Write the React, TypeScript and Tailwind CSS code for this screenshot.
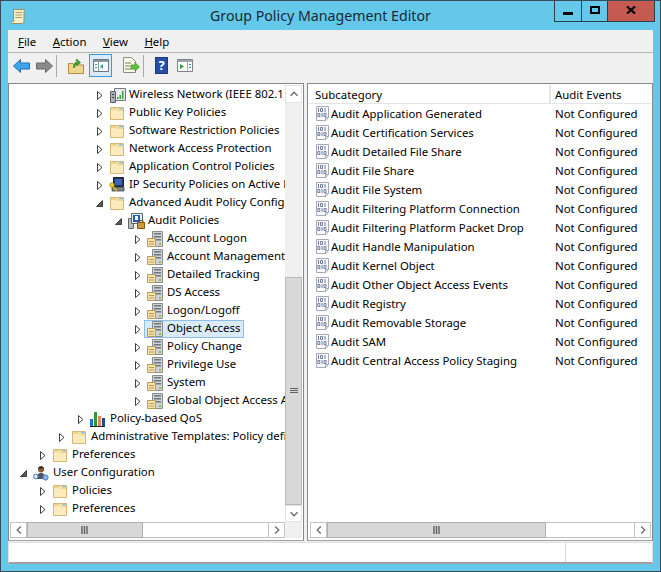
import React from "react";

const Tri = ({ open }: { open?: boolean }) =>
  open ? (
    <svg width="9" height="9" viewBox="0 0 9 9" className="shrink-0">
      <path d="M7.5 1.5V7.5H1.5Z" fill="#595959" stroke="#404040" strokeWidth="1" />
    </svg>
  ) : (
    <svg width="9" height="11" viewBox="0 0 9 11" className="shrink-0">
      <path d="M2.5 1.5L7 5.5L2.5 9.5Z" fill="#fff" stroke="#404040" strokeWidth="1" />
    </svg>
  );

const Folder = () => (
  <svg width="16" height="16" viewBox="0 0 16 16" className="shrink-0">
    <path d="M1.5 2.5H14.5V14.5H1.5Z" fill="#f7e2a6" stroke="#d3b878" />
    <path d="M2 3H7L8.5 5H14V14H2Z" fill="#fbeabb" />
    <path d="M2 5H7.5L8.5 6H14V5H8.5L7 3H2Z" fill="#efd48e" />
    <path d="M10 3H14V4.5H10Z" fill="#8ec6ee" />
  </svg>
);

const PolicyIcon = () => (
  <svg width="16" height="16" viewBox="0 0 16 16" className="shrink-0">
    <path d="M5.5 0.5H15.5V15.5H5.5Z" fill="#cfd3d6" stroke="#868c92" />
    <path d="M7 2H14V3.5H7ZM7 5H14V6.5H7ZM7 8H14V9.5H7Z" fill="#6f767c" />
    <path d="M12 12H14V14H12Z" fill="#8cc04a" />
    <path d="M0.5 7.5H8.5V15.5H0.5Z" fill="#f7e2a6" stroke="#b79c60" />
    <path d="M2 10H7V11H2ZM2 12.5H7V13.5H2Z" fill="#b39a60" />
  </svg>
);

const BinIcon = () => (
  <svg width="16" height="16" viewBox="0 0 16 16" className="shrink-0">
    <path d="M2.5 1.5H14.5V12.5L12 15.5H2.5Z" fill="#fbfbfd" stroke="#a4a9b8" />
    <path d="M11.5 15V12.5H14.5" fill="#e4e6ee" stroke="#a4a9b8" />
    <path
      d="M4.5 3V7M6.5 3.5H8.5V6.5H6.5ZM11 3V7M3.8 8.5H5.8V11.5H3.8ZM8 8V12M10 8.5H12V11.5H10Z"
      fill="none"
      stroke="#6f7da0"
    />
  </svg>
);

const WirelessIcon = () => (
  <svg width="18" height="16" viewBox="0 0 18 16" className="shrink-0">
    <path d="M5.5 1.5H16.5V13.5H5.5Z" fill="#e8ecef" stroke="#6f767c" />
    <path d="M1.5 4.5H6.5V15.5H1.5Z" fill="#a9afb5" stroke="#5d6368" />
    <path d="M8 12H9.5V10H8ZM10.5 12H12V8H10.5ZM13 12H14.5V4H13Z" fill="#3d9a3a" />
    <path d="M3 7H5V8H3ZM3 10H5V11H3Z" fill="#3c4246" />
  </svg>
);

const IpIcon = () => (
  <svg width="16" height="16" viewBox="0 0 16 16" className="shrink-0">
    <path d="M4.5 0.5H14.5V9.5H4.5Z" fill="#24356a" stroke="#222" />
    <path d="M6 2H13V8H6Z" fill="#3a64b8" />
    <path d="M3 10H15V14H3Z" fill="#7d858b" stroke="#333" strokeWidth="0.7" />
    <circle cx="3" cy="8" r="2.3" fill="#f3d020" stroke="#8a7a10" strokeWidth="0.6" />
    <path d="M4 9.5L8 14" stroke="#e0b810" strokeWidth="1.6" />
  </svg>
);

const AuditIcon = () => (
  <svg width="18" height="16" viewBox="0 0 18 16" className="shrink-0">
    <path d="M0.5 5.5H5.5V15.5H0.5Z" fill="#b9bdc1" stroke="#666" />
    <path d="M3.5 0.5H14.5V10.5H3.5Z" fill="#e8eef4" stroke="#5b6670" />
    <path d="M5 2H12V9H5Z" fill="#1e5cc0" />
    <path d="M7 3H10V7H7Z" fill="#fff" />
    <path d="M9.5 9.5H16.5V15.5H9.5Z" fill="#d29a3c" stroke="#7a5514" />
    <path d="M11 9.5V7.5H15V9.5" fill="none" stroke="#7a5514" />
  </svg>
);

const QosIcon = () => (
  <svg width="16" height="16" viewBox="0 0 16 16" className="shrink-0">
    <path d="M0 8H3V15H0Z" fill="#1f6fc8" />
    <path d="M4 1H7V15H4Z" fill="#2f9a38" />
    <path d="M8 5H11V15H8Z" fill="#f08060" />
    <path d="M12 7H15V15H12Z" fill="#18508e" />
    <path d="M0 15H15V16H0Z" fill="#222" />
  </svg>
);

const UserIcon = () => (
  <svg width="16" height="16" viewBox="0 0 16 16" className="shrink-0">
    <path d="M4 14C4 9 5.5 8 8 8C10.5 8 12 9 12 14Z" fill="#4c5560" />
    <circle cx="8" cy="4.5" r="3" fill="#8a5a34" />
    <path d="M5 3.5C5.5 0.5 10.5 0.5 11 3.5Z" fill="#2a2a2a" />
    <circle cx="2.8" cy="11.5" r="2.3" fill="#dfe8f6" stroke="#4c76b8" />
    <circle cx="12.5" cy="12.5" r="2.6" fill="#8db4e8" stroke="#4f78ba" />
  </svg>
);

type Row = { t: string; pad: string; icon: React.ReactNode; open?: boolean; sel?: boolean };

const tree: Row[] = [
  { t: "Wireless Network (IEEE 802.11) Policies", pad: "pl-[85px]", icon: <WirelessIcon /> },
  { t: "Public Key Policies", pad: "pl-[85px]", icon: <Folder /> },
  { t: "Software Restriction Policies", pad: "pl-[85px]", icon: <Folder /> },
  { t: "Network Access Protection", pad: "pl-[85px]", icon: <Folder /> },
  { t: "Application Control Policies", pad: "pl-[85px]", icon: <Folder /> },
  { t: "IP Security Policies on Active Directory", pad: "pl-[85px]", icon: <IpIcon /> },
  { t: "Advanced Audit Policy Configuration", pad: "pl-[85px]", icon: <Folder />, open: true },
  { t: "Audit Policies", pad: "pl-[104px]", icon: <AuditIcon />, open: true },
  { t: "Account Logon", pad: "pl-[123px]", icon: <PolicyIcon /> },
  { t: "Account Management", pad: "pl-[123px]", icon: <PolicyIcon /> },
  { t: "Detailed Tracking", pad: "pl-[123px]", icon: <PolicyIcon /> },
  { t: "DS Access", pad: "pl-[123px]", icon: <PolicyIcon /> },
  { t: "Logon/Logoff", pad: "pl-[123px]", icon: <PolicyIcon /> },
  { t: "Object Access", pad: "pl-[123px]", icon: <PolicyIcon />, sel: true },
  { t: "Policy Change", pad: "pl-[123px]", icon: <PolicyIcon /> },
  { t: "Privilege Use", pad: "pl-[123px]", icon: <PolicyIcon /> },
  { t: "System", pad: "pl-[123px]", icon: <PolicyIcon /> },
  { t: "Global Object Access Auditing", pad: "pl-[123px]", icon: <PolicyIcon /> },
  { t: "Policy-based QoS", pad: "pl-[66px]", icon: <QosIcon /> },
  { t: "Administrative Templates: Policy definitions", pad: "pl-[47px]", icon: <Folder /> },
  { t: "Preferences", pad: "pl-[28px]", icon: <Folder /> },
  { t: "User Configuration", pad: "pl-[9px]", icon: <UserIcon />, open: true },
  { t: "Policies", pad: "pl-[28px]", icon: <Folder /> },
  { t: "Preferences", pad: "pl-[28px]", icon: <Folder /> },
];

const list = [
  "Audit Application Generated",
  "Audit Certification Services",
  "Audit Detailed File Share",
  "Audit File Share",
  "Audit File System",
  "Audit Filtering Platform Connection",
  "Audit Filtering Platform Packet Drop",
  "Audit Handle Manipulation",
  "Audit Kernel Object",
  "Audit Other Object Access Events",
  "Audit Registry",
  "Audit Removable Storage",
  "Audit SAM",
  "Audit Central Access Policy Staging",
];

const Chev = ({ d }: { d: string }) => (
  <svg width="14" height="14" viewBox="0 0 16 16">
    <path d={d} fill="none" stroke="#6d6d6d" strokeWidth="1.6" />
  </svg>
);
const Grip = ({ v }: { v?: boolean }) => (
  <svg width="8" height="8" viewBox="0 0 8 8">
    {v ? (
      <path d="M0 1.5H8M0 3.5H8M0 5.5H8" stroke="#606060" />
    ) : (
      <path d="M1 0V8M3.5 0V8M6 0V8" stroke="#606060" strokeWidth="1.4" />
    )}
  </svg>
);

const Btn = ({ d, cls }: { d: string; cls: string }) => (
  <div className={`flex items-center justify-center bg-white border border-[#c4c4c4] ${cls}`}>
    <Chev d={d} />
  </div>
);

const Sep = ({ cls }: { cls: string }) => <div className={`w-px h-[22px] bg-[#a8a8a8] ${cls}`} />;

const U = ({ c, r }: { c: string; r: string }) => (
  <span>
    <span className="underline">{c}</span>
    {r}
  </span>
);

export default function App() {
  return (
    <div className="w-[661px] h-[572px] flex flex-col bg-[#63c8ea] border border-[#3b4b55] overflow-hidden font-['Noto_Sans',sans-serif] text-[11.4px] text-black box-border">
      <div className="h-[29px] shrink-0 flex items-start">
        <svg width="17" height="17" viewBox="0 0 17 17" className="ml-[9px] mt-[7px] shrink-0">
          <path d="M3.5 1.5H13.5C14.5 1.5 14.5 3 14 3.5V13C14 15 13 15.5 12 15.5H2C1 15.5 1 13.5 2.5 13.5H3.5Z" fill="#f5edc8" stroke="#a08f5a" />
          <path d="M5.5 4.5H12M5.5 7H12M5.5 9.5H12" stroke="#b0a070" />
        </svg>
        <div className="ml-[183px] mt-[5px] text-[14.2px] leading-[20px] text-[#1a2a33] whitespace-nowrap">
          Group Policy Management Editor
        </div>
        <div className="ml-auto mr-[5px] flex h-[21px] border border-t-0 border-[#2e3f47]">
          <div className="w-[27px] flex items-center justify-center border-r border-[#2e3f47]">
            <div className="w-[10px] h-[3px] bg-black mt-[4px]" />
          </div>
          <div className="w-[26px] flex items-center justify-center border-r border-[#2e3f47]">
            <div className="w-[10px] h-[8px] border-2 border-black mb-[2px]" />
          </div>
          <div className="w-[46px] bg-[#c55b50] flex items-center justify-center">
            <svg width="10" height="8" viewBox="0 0 10 8" className="mb-[2px]">
              <path d="M1 0.5L9 7.5M9 0.5L1 7.5" stroke="#000" strokeWidth="2.2" />
            </svg>
          </div>
        </div>
      </div>

      <div className="mx-[7px] mb-[7px] flex-1 min-h-0 flex flex-col bg-[#f0f0f0]">
        <div className="h-[23px] shrink-0 flex items-center gap-[16.5px] pl-[10px] pt-[2px] border-b border-[#b4b8b8]">
          <U c="F" r="ile" />
          <U c="A" r="ction" />
          <U c="V" r="iew" />
          <U c="H" r="elp" />
        </div>

        <div className="h-[30px] shrink-0 flex items-center pb-[5px]">
          <svg width="17" height="14" viewBox="0 0 17 14" className="ml-[5px]">
            <path d="M0.5 7L7.5 0.5V4H16.5V10H7.5V13.5Z" fill="#3fa4ea" stroke="#1d6cb4" />
          </svg>
          <svg width="17" height="14" viewBox="0 0 17 14" className="ml-[6px]">
            <path d="M16.5 7L9.5 0.5V4H0.5V10H9.5V13.5Z" fill="#8a8a8a" stroke="#666" />
          </svg>
          <Sep cls="ml-[3px]" />
          <svg width="16" height="16" viewBox="0 0 16 16" className="ml-[11px]">
            <path d="M0.5 5.5H5L6 7H15.5V15.5H0.5Z" fill="#f0d58c" stroke="#b08c3c" />
            <path d="M6 10C6 6 7.5 4.5 9.5 4.5M8 1.5L11.5 4.5L8 7.5" fill="none" stroke="#3c9a34" strokeWidth="2" />
          </svg>
          <div className="ml-[5px] w-[23px] h-[23px] bg-[#d9ebf9] border border-[#3d98d8] flex items-center justify-center">
            <svg width="16" height="13" viewBox="0 0 16 13">
              <path d="M0.5 0.5H15.5V12.5H0.5Z" fill="#fff" stroke="#6c7680" />
              <path d="M1 1H15V3H1Z" fill="#8c96a0" />
              <path d="M5.5 3V12" stroke="#8c96a0" />
              <path d="M2 5H4V6H2ZM2 8H4V9H2ZM7 7.5L10 5V10Z" fill="#2f9a9a" />
            </svg>
          </div>
          <svg width="18" height="17" viewBox="0 0 18 17" className="ml-[10px]">
            <path d="M1.5 0.5H9.5L13.5 4.5V15.5H1.5Z" fill="#fdfbe8" stroke="#8a8a8a" />
            <path d="M3 6H9M3 9H8M3 12H9" stroke="#7a7a58" />
            <path d="M9 8H13V5.5L17.5 10L13 14V12H9Z" fill="#5ec03c" stroke="#3a8e26" strokeWidth="0.7" />
          </svg>
          <Sep cls="ml-[3px]" />
          <div className="ml-[11px] w-[13px] h-[17px] bg-[#244ea8] border border-[#1c3880] flex items-center justify-center text-white font-bold text-[13px] leading-none">
            ?
          </div>
          <svg width="16" height="13" viewBox="0 0 16 13" className="ml-[9px]">
            <path d="M0.5 0.5H15.5V12.5H0.5Z" fill="#fff" stroke="#7c8288" />
            <path d="M1 1H15V3H1Z" fill="#a0a6ac" />
            <path d="M10.5 3V12" stroke="#a0a6ac" />
            <path d="M3 5L7 7.5L3 10Z" fill="#35a03c" />
            <path d="M12 5H14V6H12ZM12 8H14V9H12Z" fill="#3d80c0" />
          </svg>
        </div>

        <div className="h-[458px] shrink-0 flex gap-[3px]">
          <div className="w-[296px] border border-[#828790] border-b-[#a0a0a0] bg-white flex flex-col pt-px pl-px pr-px pb-[2px]">
            <div className="flex-1 min-h-0 flex">
              <div className="w-[275px] overflow-hidden pt-px">
                {tree.map((r) => (
                  <div key={r.t + r.pad} className={`h-[18px] flex items-center whitespace-nowrap ${r.pad}`}>
                    <div className="w-[9px] shrink-0 flex justify-center">
                      <Tri open={r.open} />
                    </div>
                    <div className={`ml-[2px] h-[18px] flex items-center border pl-[2px] pr-[3px] ${r.sel ? "bg-[#d9ebf9] border-[#8dbdec]" : "border-transparent"}`}>
                      <div className="w-[18px] shrink-0 flex">{r.icon}</div>
                      <span className="ml-[1px] pl-[1px] mb-[2px] leading-[16px]">{r.t}</span>
                    </div>
                  </div>
                ))}
              </div>
              <div className="w-[17px] shrink-0 flex flex-col bg-[#f0f0f0]">
                <div className="h-[18px] shrink-0 flex items-center justify-center bg-white border border-[#e4e4e4]">
                  <Chev d="M4 10L8 6L12 10" />
                </div>
                <div className="h-[174px] shrink-0" />
                <div className="flex-1 bg-[#d8d8d8] border border-[#b8b8b8] flex items-center justify-center">
                  <Grip v />
                </div>
                <div className="h-[17px] shrink-0 flex items-center justify-center bg-white border border-[#e4e4e4]">
                  <Chev d="M4 6L8 10L12 6" />
                </div>
              </div>
            </div>
            <div className="h-[16px] shrink-0 flex">
              <Btn d="M10 4L6 8L10 12" cls="w-[17px]" />
              <div className="w-[116px] bg-[#d8d8d8] border border-[#b0b0b0] flex items-center justify-center">
                <Grip />
              </div>
              <div className="w-[125px] border-y border-[#c4c4c4]" />
              <Btn d="M6 4L10 8L6 12" cls="w-[17px]" />
              <div className="w-[17px] bg-[#f0f0f0]" />
            </div>
          </div>

          <div className="flex-1 min-w-0 border border-[#828790] border-b-[#a0a0a0] bg-white flex flex-col pt-px px-px pb-[2px]">
            <div className="h-[19px] shrink-0 flex border-b border-[#e5e5e5]">
              <div className="w-[242px] pl-[6px] leading-[19px] border-r-2 border-[#e5e5e5]">Subcategory</div>
              <div className="flex-1 pl-[4px] leading-[19px]">Audit Events</div>
            </div>
            <div className="flex-1 min-h-0">
              {list.map((t) => (
                <div key={t} className="h-[19px] flex items-center whitespace-nowrap">
                  <div className="w-[242px] pl-[5px] flex items-center gap-[1px]">
                    <BinIcon />
                    <span>{t}</span>
                  </div>
                  <div className="pl-[4px]">Not Configured</div>
                </div>
              ))}
            </div>
            <div className="h-[16px] shrink-0 flex ml-px">
              <Btn d="M10 4L6 8L10 12" cls="w-[17px]" />
              <div className="w-[219px] bg-[#d8d8d8] border border-[#b0b0b0] flex items-center justify-center">
                <Grip />
              </div>
              <div className="flex-1 border-y border-[#c4c4c4]" />
              <Btn d="M6 4L10 8L6 12" cls="w-[17px]" />
            </div>
          </div>
        </div>

        <div className="mt-px flex-1 min-h-0 flex bg-white border border-[#e0e0e0] border-b-2 border-b-[#a0a0a0]">
          <div className="flex-1" />
          <div className="w-[87px] border-l border-[#d8d8d8]" />
        </div>
      </div>
    </div>
  );
}
